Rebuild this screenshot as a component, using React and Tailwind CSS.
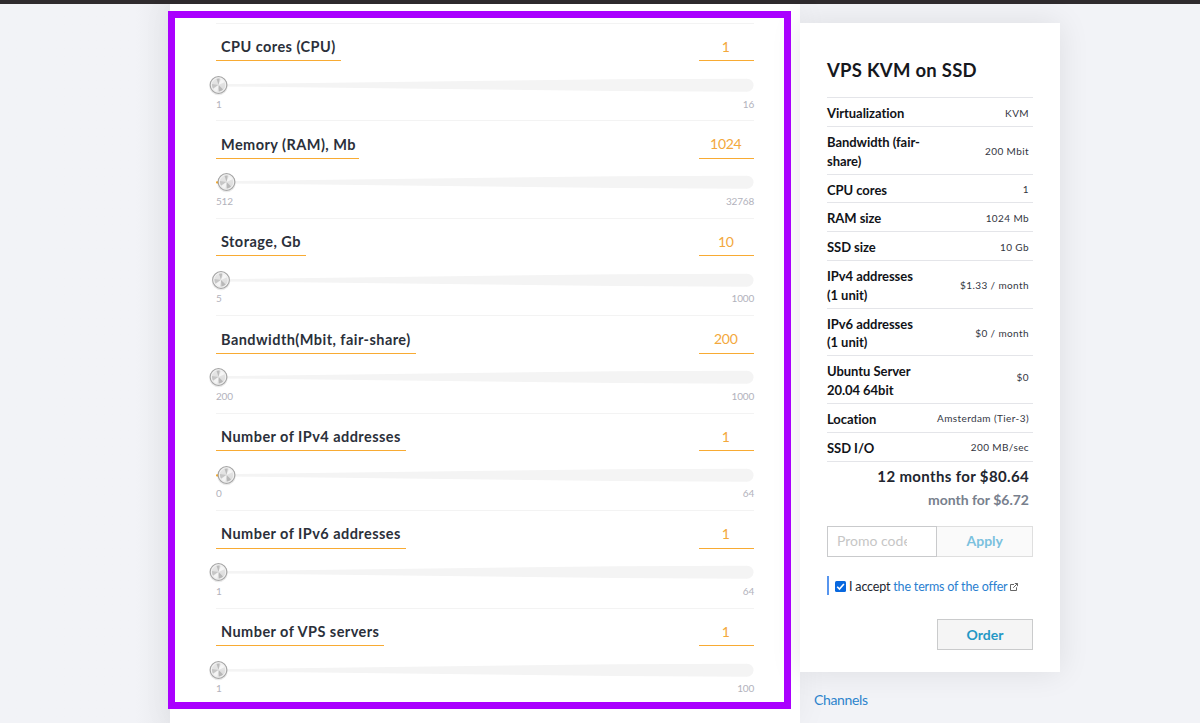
import React from "react";

const sliders = [
  { title: "CPU cores (CPU)", value: "1", min: "1", max: "16", width: "w-[125px]", knob: 2.5 },
  { title: "Memory (RAM), Mb", value: "1024", min: "512", max: "32768", width: "w-[143px]", knob: 10.5 },
  { title: "Storage, Gb", value: "10", min: "5", max: "1000", width: "w-[90px]", knob: 5 },
  { title: "Bandwidth(Mbit, fair-share)", value: "200", min: "200", max: "1000", width: "w-[200px]", knob: 2.5 },
  { title: "Number of IPv4 addresses", value: "1", min: "0", max: "64", width: "w-[190px]", knob: 10.5 },
  { title: "Number of IPv6 addresses", value: "1", min: "1", max: "64", width: "w-[190px]", knob: 2.5 },
  { title: "Number of VPS servers", value: "1", min: "1", max: "100", width: "w-[168px]", knob: 2.5 },
];

const specs = [
  { label: ["Virtualization"], value: "KVM" },
  { label: ["Bandwidth (fair-", "share)"], value: "200 Mbit" },
  { label: ["CPU cores"], value: "1" },
  { label: ["RAM size"], value: "1024 Mb" },
  { label: ["SSD size"], value: "10 Gb" },
  { label: ["IPv4 addresses", "(1 unit)"], value: "$1.33 / month" },
  { label: ["IPv6 addresses", "(1 unit)"], value: "$0 / month" },
  { label: ["Ubuntu Server", "20.04 64bit"], value: "$0", raised: true },
  { label: ["Location"], value: "Amsterdam (Tier-3)" },
  { label: ["SSD I/O"], value: "200 MB/sec" },
];

function Track({ knob }) {
  return (
    <svg className="block overflow-visible" width="538" height="20" viewBox="0 0 538 20">
      <defs>
        <linearGradient id="knobFace" x1="0" y1="0" x2="0" y2="1">
          <stop offset="0" stopColor="#e9e9e9" />
          <stop offset="1" stopColor="#d9d9d9" />
        </linearGradient>
      </defs>
      <path d="M2 9.2 L400 4.2 L531 3.7 A6.5 6.5 0 0 1 531 16.7 L400 16 L2 11.4 Z" fill="#f4f4f4" />
      {knob > 8 && <rect x="0" y="9.2" width="5" height="2.4" rx="1" fill="#f5a623" />}
      <circle cx={knob} cy="10.9" r="9.3" fill="#000" opacity="0.08" />
      <g transform={`translate(${knob} 10)`}>
        <circle r="8.3" fill="url(#knobFace)" stroke="#a6a6a6" strokeWidth="1.2" />
        <circle r="7.2" fill="none" stroke="#f5f5f5" strokeWidth="0.9" />
        <path d="M0 0 L-2 -6.3 A6.6 6.6 0 0 1 1.3 -6.4 Z" fill="#bcbcbc" />
        <path d="M0 0 L-6.5 -1 A6.6 6.6 0 0 0 -5.5 3.6 Z" fill="#c6c6c6" />
        <path d="M0 0 L0.5 6.5 A6.6 6.6 0 0 0 4.6 4.6 Z" fill="#b8b8b8" />
        <path d="M0 0 L2.5 -6 A6.6 6.6 0 0 1 6 -2.7 Z" fill="#f6f6f6" />
        <path d="M0 0 L-5.4 3.9 A6.6 6.6 0 0 0 -1 6.5 Z" fill="#f4f4f4" />
      </g>
    </svg>
  );
}

function SliderRow({ item }) {
  return (
    <div className="h-[97.45px] border-t border-[#f3f3f3]">
      <div className="flex h-[37.45px] items-stretch justify-between">
        <div className={`${item.width} border-b border-[#f8ab33] pl-[5px] pt-[13.2px] text-[14.5px] leading-5 font-bold tracking-[0.45px] whitespace-nowrap text-[#2b303a]`}>
          {item.title}
        </div>
        <div className="w-[55px] border-b border-[#f8ab33] pt-[13px] pr-[1.5px] text-center text-[14px] leading-5 font-normal tracking-[-0.3px] text-[#f3a83c]">
          {item.value}
        </div>
      </div>
      <div className="mt-[13.6px]">
        <Track knob={item.knob} />
      </div>
      <div className="mt-[1.5px] flex justify-between text-[10px] leading-[14px] tracking-[-0.2px] text-[#b2b2bc]">
        <span>{item.min}</span>
        <span>{item.max}</span>
      </div>
    </div>
  );
}

export default function App() {
  return (
    <div className="relative flex h-[723px] w-[1200px] flex-col overflow-hidden bg-[#f2f3f7] font-['Lato','Noto_Sans',sans-serif]">
      <div className="h-1 shrink-0 bg-[#2f2b2e]" />
      <div className="flex h-[719px]">
        <div className="w-[170px] shrink-0 bg-linear-to-r from-[#f2f3f7] from-80% to-[#e9eaee]" />
        <main className="h-full w-[630px] shrink-0 bg-white px-[46px] pt-[19px] shadow-[0_0_30px_rgba(0,0,0,0.05)]">
          {sliders.map((item) => (
            <SliderRow key={item.title} item={item} />
          ))}
        </main>
        <aside className="w-[260px] shrink-0 pt-[19px]">
          <section className="h-[649px] bg-white px-[27px] pt-[33px] shadow-[0_0_30px_rgba(0,0,0,0.09)]">
            <h2 className="h-[41.3px] text-[18.5px] leading-[28px] font-bold tracking-[0.25px] whitespace-nowrap text-[#16181d]">VPS KVM on SSD</h2>
            <div className="border-b border-[#e4e5e9]">
              {specs.map((row) => (
                <div
                  key={row.label[0]}
                  className={`flex items-center justify-between border-t border-[#e4e5e9] pr-[4px] ${row.label.length > 1 ? "h-[47.7px]" : "h-[28.75px]"}`}
                >
                  <div className="pt-[2.4px] text-[13px] leading-[18.6px] font-bold tracking-[-0.05px] whitespace-nowrap text-[#111318]">
                    {row.label.map((line) => (
                      <div key={line}>{line}</div>
                    ))}
                  </div>
                  <div className={`text-[10px] leading-4 tracking-[0.4px] whitespace-nowrap text-[#33363f] ${row.raised ? "pb-[5px]" : "pt-[1px]"}`}>{row.value}</div>
                </div>
              ))}
            </div>
            <div className="pt-[2px] pr-[4px] text-right text-[15px] leading-6 font-bold tracking-[0.35px] whitespace-nowrap text-[#22262f]">12 months for $80.64</div>
            <div className="pr-[4px] text-right text-[14px] leading-6 font-bold whitespace-nowrap text-[#78808d]">month for $6.72</div>
            <div className="mt-[14px] flex h-[31px]">
              <div className="w-[111px] border border-[#c9cacc] pl-[9px] text-[14px] leading-[28px] text-[#c6c6c6]">
                <div className="w-[70px] overflow-hidden whitespace-nowrap">Promo code</div>
              </div>
              <button className="w-[96px] border border-l-0 border-[#dfdfdf] bg-[#fafafa] text-[14px] leading-[28px] font-bold text-[#7bc1de]">Apply</button>
            </div>
            <div className="mt-[19px] flex h-[19px] items-center border-l-2 border-[#5795ee] pl-[6px] text-[12.5px] tracking-[-0.17px] whitespace-nowrap text-[#22262f]">
              <svg className="mt-[2px] shrink-0" width="11" height="11" viewBox="0 0 11 11">
                <rect width="11" height="11" rx="1.5" fill="#0868df" />
                <path d="M2.2 5.7 4.5 8 8.9 3" fill="none" stroke="#fff" strokeWidth="1.6" />
              </svg>
              <span className="ml-[3px] pt-[4px]">I accept</span>
              <span className="ml-[3px] pt-[4px] text-[#2a80d0]">the terms of the offer</span>
              <svg className="mt-[3px] ml-[2px] shrink-0" width="8" height="8" viewBox="0 0 8 8" fill="none" stroke="#555" strokeWidth="0.9">
                <path d="M4 1.5H.5v6h6V4.3M4.8.5h2.7v2.7M7.3.7 3.2 4.8" />
              </svg>
            </div>
            <div className="mt-[24px] flex justify-end">
              <button className="h-[31px] w-[96px] border border-[#cacbcc] bg-[#f5f5f5] text-[14px] leading-[29px] font-bold text-[#2498c5]">Order</button>
            </div>
          </section>
          <a className="mt-[18px] ml-[14px] block text-[14px] leading-5 tracking-[-0.35px] text-[#2d84cc]">Channels</a>
        </aside>
      </div>
      <div className="pointer-events-none absolute top-[11px] left-[168px] h-[698px] w-[623px] border-[7px] border-[#aa00ff]" />
    </div>
  );
}
